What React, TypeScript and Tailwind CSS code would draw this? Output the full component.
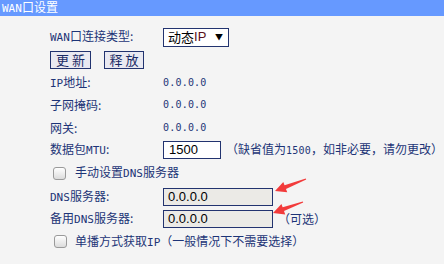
import React from "react";

const M = ({ children }: { children: React.ReactNode }) => (
  <span className="font-['DejaVu_Sans_Mono'] text-[11px]">{children}</span>
);

const V = ({ children }: { children: React.ReactNode }) => (
  <span className="font-['DejaVu_Sans_Mono'] text-[10px] tracking-[0.2px]">{children}</span>
);

function arrowPoints(tx: number, ty: number, ex: number, ey: number) {
  const dx = ex - tx;
  const dy = ey - ty;
  const len = Math.hypot(dx, dy);
  const ux = dx / len;
  const uy = dy / len;
  const nx = -uy;
  const ny = ux;
  const h = 11;
  const w = 11;
  const s = 4;
  const bx = tx + ux * h;
  const by = ty + uy * h;
  const pts = [
    [tx, ty],
    [bx + (nx * w) / 2, by + (ny * w) / 2],
    [bx + (nx * s) / 2, by + (ny * s) / 2],
    [ex + nx * 0.6, ey + ny * 0.6],
    [ex - nx * 0.6, ey - ny * 0.6],
    [bx - (nx * s) / 2, by - (ny * s) / 2],
    [bx - (nx * w) / 2, by - (ny * w) / 2],
  ];
  return pts.map((p) => p.join(",")).join(" ");
}

const Check = () => (
  <div className="w-[13px] h-[13px] rounded-[3px] border border-[#9a9a9a] bg-gradient-to-b from-[#ffffff] to-[#dcdcdc] shrink-0" />
);

export default function App() {
  return (
    <div className="w-[444px] h-[264px] bg-[#f4f4f4] relative overflow-hidden font-['Noto_Sans_CJK_SC',sans-serif] text-[12px] leading-[14px] text-[#1d3477]">
      <div className="h-[16px] bg-[#6699ff] text-white pl-[2px] leading-[13px]">
        <M>WAN</M>口设置
      </div>
      <div className="pt-[10px] pl-[50px] flex flex-col">
        <div className="h-[22px] flex items-center">
          <div className="w-[113px] shrink-0">
            <M>WAN</M>口连接类型:
          </div>
          <div className="w-[66px] h-[19px] border border-[#22336f] bg-white flex items-center pl-[4px] pr-[5px] text-[13px] text-black">
            <span>动态</span>
            <span className="font-['Liberation_Sans'] text-[#5a1020]">IP</span>
            <span className="ml-auto text-[8px]">▼</span>
          </div>
        </div>
        <div className="h-[23px] flex items-center gap-[13px]">
          <div className="w-[41px] h-[18px] border border-[#22336f] bg-[#e9e9f1] flex items-center justify-center text-[13px] text-[#1a2b66]">
            更&nbsp;新
          </div>
          <div className="w-[40px] h-[18px] border border-[#22336f] bg-[#e9e9f1] flex items-center justify-center text-[13px] text-[#1a2b66]">
            释&nbsp;放
          </div>
        </div>
        <div className="h-[23px] flex items-center">
          <div className="w-[113px] shrink-0">
            <M>IP</M>地址:
          </div>
          <V>0.0.0.0</V>
        </div>
        <div className="h-[22px] flex items-center">
          <div className="w-[113px] shrink-0">子网掩码:</div>
          <V>0.0.0.0</V>
        </div>
        <div className="h-[23px] flex items-center">
          <div className="w-[113px] shrink-0">网关:</div>
          <V>0.0.0.0</V>
        </div>
        <div className="h-[22px] flex items-center">
          <div className="w-[113px] shrink-0">
            数据包<M>MTU</M>:
          </div>
          <div className="w-[58px] h-[18px] border border-[#22336f] bg-white flex items-center pl-[5px] font-['Liberation_Sans'] text-[13px] text-black">
            1500
          </div>
          <div className="ml-[5px]">
            （缺省值为<V>1500</V>，如非必要，请勿更改）
          </div>
        </div>
        <div className="h-[24px] flex items-center">
          <div className="ml-[3px]">
            <Check />
          </div>
          <div className="ml-[9px]">
            手动设置<M>DNS</M>服务器
          </div>
        </div>
        <div className="h-[23px] flex items-center">
          <div className="w-[113px] shrink-0">
            <M>DNS</M>服务器:
          </div>
          <div className="w-[110px] h-[18px] border border-[#22336f] bg-[#ebeae6] flex items-center pl-[4px] font-['Liberation_Sans'] text-[13px] text-black">
            0.0.0.0
          </div>
        </div>
        <div className="h-[22px] flex items-center">
          <div className="w-[113px] shrink-0">
            备用<M>DNS</M>服务器:
          </div>
          <div className="w-[110px] h-[18px] border border-[#22336f] bg-[#ebeae6] flex items-center pl-[4px] font-['Liberation_Sans'] text-[13px] text-black">
            0.0.0.0
          </div>
          <div className="ml-[5px]">（可选）</div>
        </div>
        <div className="h-[23px] flex items-center">
          <div className="ml-[4px]">
            <Check />
          </div>
          <div className="ml-[8px]">
            单播方式获取<M>IP</M>（一般情况下不需要选择）
          </div>
        </div>
      </div>
      <svg className="absolute inset-0 pointer-events-none" width="444" height="264">
        <polygon points={arrowPoints(275, 191, 306, 179)} fill="#f23b3b" />
        <polygon points={arrowPoints(273, 213, 303, 202)} fill="#f23b3b" />
      </svg>
    </div>
  );
}
